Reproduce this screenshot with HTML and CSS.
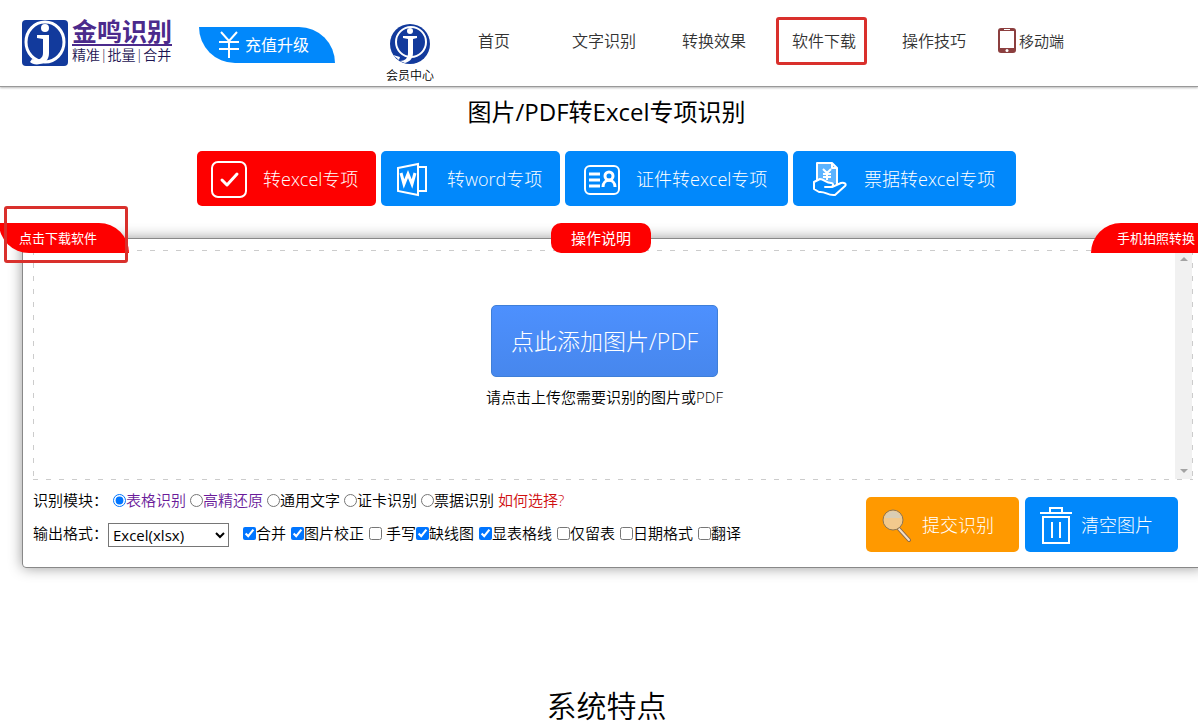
FILE: index.html
```html
<!DOCTYPE html>
<html lang="zh-CN">
<head>
    <meta charset="UTF-8">
    <meta name="viewport" content="width=device-width, initial-scale=1.0">
    <title>金鸣识别</title>
    <link rel="stylesheet" href="styles.css">
</head>
<body>
    <!-- Header: logo, upgrade button, member center and navigation -->
    <header class="header">
        <a class="logo" href="#">
            <svg class="logo-mark" viewBox="0 0 46 46" aria-hidden="true">
                <rect width="46" height="46" rx="4" fill="#123a9c"/>
                <ellipse cx="23" cy="22" rx="19" ry="20" fill="none" stroke="#fff" stroke-width="3"/>
                <circle cx="23" cy="8" r="4" fill="#fff"/>
                <path d="M15 15h12v18c0 6-3 10-9 11-4 1-8 0-10-2l2-3c4 2 11 1 11-6V19l-6-1z" fill="#fff"/>
            </svg>
            <span class="logo-text">
                <strong class="logo-name">金鸣识别</strong>
                <span class="logo-slogan">精准|批量|合并</span>
            </span>
        </a>
        <button class="upgrade-button" type="button">
            <svg class="yen-icon" viewBox="0 0 20 28" fill="none" stroke="#fff" stroke-width="2" aria-hidden="true">
                <path d="M2 1l8 9 8-9M0 11h20M0 18h20M10 10v17"/>
            </svg>
            充值升级
        </button>
        <a class="member" href="#">
            <svg class="member-icon" viewBox="0 0 40 40" aria-hidden="true">
                <circle cx="20" cy="20" r="20" fill="#123a9c"/>
                <circle cx="21" cy="18" r="15" fill="none" stroke="#fff" stroke-width="2"/>
                <circle cx="20" cy="7" r="3" fill="#fff"/>
                <path d="M13 12h14v2l-4 1v14c0 6-4 9-8 10l-5-2c5 0 8-3 8-8V15l-5-1zM3 31l7 2-1 3z" fill="#fff"/>
            </svg>
            会员中心
        </a>
        <nav class="nav">
            <a href="#">首页</a>
            <a href="#">文字识别</a>
            <a href="#">转换效果</a>
            <a class="marked" href="#">软件下载</a>
            <a href="#">操作技巧</a>
        </nav>
        <a class="mobile" href="#">
            <svg class="phone-icon" viewBox="0 0 18 25" aria-hidden="true">
                <rect width="18" height="25" rx="3" fill="#8c3f3f"/>
                <path d="M2 3h14v17H2z" fill="#fff"/>
                <path d="M6 1.500h6" stroke="#fff"/>
                <circle cx="9" cy="22.500" r="1.500" fill="#fff"/>
            </svg>
            移动端
        </a>
    </header>

    <main class="content">
        <h1>图片/PDF转Excel专项识别</h1>

        <!-- Conversion types -->
        <div class="tabs">
            <button class="tab active" type="button">
                <svg viewBox="0 0 38 38" fill="none" stroke="#fff" stroke-linecap="round" stroke-linejoin="round" aria-hidden="true">
                    <rect x="2" y="2" width="34" height="35" rx="6" stroke-width="2"/>
                    <path d="M12 20l5 5 10-11" stroke-width="3"/>
                </svg>
                转excel专项
            </button>
            <button class="tab" type="button">
                <svg viewBox="0 0 38 38" fill="none" stroke="#fff" stroke-width="2" aria-hidden="true">
                    <path d="M4 8l20-4v31L4 31zM24 7h8v24h-8"/>
                    <path d="M7 13l3 11 4-10 4 10 3-11" stroke-width="3"/>
                </svg>
                转word专项
            </button>
            <button class="tab wide" type="button">
                <svg viewBox="0 0 38 38" fill="none" stroke="#fff" stroke-width="3" aria-hidden="true">
                    <rect x="2" y="6" width="34" height="28" rx="5" stroke-width="2"/>
                    <path d="M6 14h11M6 20h11M6 26h11"/>
                    <circle cx="26" cy="16" r="4"/>
                    <path d="M20 27c0-9 12-9 12 0"/>
                </svg>
                证件转excel专项
            </button>
            <button class="tab wide" type="button">
                <svg viewBox="0 0 38 38" fill="none" stroke="#fff" stroke-width="2" stroke-linejoin="round" aria-hidden="true">
                    <path d="M6 20V3h15l5 5v16" fill="#5db4ff"/>
                    <path d="M21 3v5h5"/>
                    <path d="M12 9l4 4 4-4M12 14h8M12 17h8M16 13v7"/>
                    <path d="M3 22l6-3c4 0 6 4 11 4 3 0 3 4-1 4h-5 7l9-4c3-1 6 1 4 3l-10 9c-8 1-9-4-16-3l-5-3z" fill="#0188fb"/>
                </svg>
                票据转excel专项
            </button>
        </div>

        <!-- Upload panel -->
        <section class="panel">
            <a class="ribbon ribbon-left" href="#">点击下载软件</a>
            <a class="ribbon ribbon-middle" href="#">操作说明</a>
            <a class="ribbon ribbon-right" href="#">手机拍照转换</a>
            <span class="download-mark"></span>

            <div class="drop-area">
                <div class="drop-body">
                    <button class="add-button" type="button">点此添加图片/PDF</button>
                    <p>请点击上传您需要识别的图片或PDF</p>
                </div>
                <div class="scroll-track" aria-hidden="true">
                    <span class="arrow-up"></span>
                    <span class="arrow-down"></span>
                </div>
            </div>

            <form class="options">
                <div class="option-rows">
                    <div class="row">
                        <span class="row-label">识别模块：</span>
                        <div class="choices modules">
                            <label class="visited"><input type="radio" name="module" checked>表格识别</label>
                            <label class="visited"><input type="radio" name="module">高精还原</label>
                            <label><input type="radio" name="module">通用文字</label>
                            <label><input type="radio" name="module">证卡识别</label>
                            <label><input type="radio" name="module">票据识别</label>
                            <a class="help" href="#">如何选择?</a>
                        </div>
                    </div>
                    <div class="row">
                        <label class="row-label" for="format">输出格式：</label>
                        <select id="format">
                            <option>Excel(xlsx)</option>
                        </select>
                        <div class="choices formats">
                            <label><input type="checkbox" checked>合并</label>
                            <label><input type="checkbox" checked>图片校正</label>
                            <div class="pair">
                                <label class="spaced"><input type="checkbox">手写</label>
                                <label><input type="checkbox" checked>缺线图</label>
                            </div>
                            <label><input type="checkbox" checked>显表格线</label>
                            <label><input type="checkbox">仅留表</label>
                            <label><input type="checkbox">日期格式</label>
                            <label><input type="checkbox">翻译</label>
                        </div>
                    </div>
                </div>
                <div class="actions">
                    <button class="action submit" type="button">
                        <svg viewBox="0 0 34 40" aria-hidden="true">
                            <path d="M19 24l10 11" stroke="#8a6a4c" stroke-width="4" stroke-linecap="round"/>
                            <path d="M19 24l10 11" stroke="#f3dfc8" stroke-width="2" stroke-linecap="round"/>
                            <circle cx="13" cy="15" r="10" fill="#f2c98d" stroke="#8a7658"/>
                            <path d="M5 13c2-9 14-9 16 0z" fill="#d9cdb5"/>
                        </svg>
                        提交识别
                    </button>
                    <button class="action" type="button">
                        <svg viewBox="0 0 34 40" fill="none" stroke="#fff" stroke-width="2" aria-hidden="true">
                            <path d="M1 8h32M11 8V3h12v5M4 12h26v26H4zM13 17v16M21 17v16"/>
                        </svg>
                        清空图片
                    </button>
                </div>
            </form>
        </section>

        <h2>系统特点</h2>
    </main>
</body>
</html>
```
FILE: styles.css
```css
* {
    box-sizing: border-box;
}

html {
    overflow: hidden;
}

body {
    margin: 0;
    font-family: "Open Sans", "Noto Sans CJK SC", sans-serif;
    font-size: 15px;
    font-weight: 350;
    line-height: 20px;
    color: #000;
    background-color: #fff;
}

a {
    color: inherit;
    text-decoration: none;
}

button {
    border: none;
    padding: 0;
    font: inherit;
    font-weight: 300;
    color: #fff;
    cursor: pointer;
}

/* Header */
.header {
    display: flex;
    align-items: flex-start;
    height: 87px;
    padding-left: 22px;
    border-bottom: 1px solid #999;
    box-shadow: 0 1px 2px #bbb;
    white-space: nowrap;
}

.logo {
    display: flex;
    gap: 4px;
    width: 177px;
    padding-top: 20px;
}

.logo-mark {
    width: 46px;
    height: 46px;
}

.logo-text {
    display: flex;
    flex-direction: column;
    color: #4b2a8c;
}

.logo-name {
    height: 26px;
    border-bottom: 2px solid #4b2a8c;
    font-size: 25px;
    font-weight: 700;
    line-height: 22px;
}

.logo-slogan {
    font-size: 14px;
    line-height: 18px;
    color: #1d1452;
}

.upgrade-button {
    display: flex;
    align-items: center;
    gap: 6px;
    width: 136px;
    height: 36px;
    margin-top: 27px;
    padding-left: 20px;
    border-radius: 0 40px 0 40px;
    background-color: #0188fb;
    font-size: 16px;
    font-weight: 400;
}

.yen-icon {
    width: 20px;
    height: 28px;
}

.member {
    display: flex;
    flex-direction: column;
    align-items: center;
    width: 48px;
    margin-left: 51px;
    padding-top: 24px;
    font-size: 12px;
    line-height: 24px;
}

.member-icon {
    width: 40px;
    height: 40px;
}

.nav {
    display: flex;
    gap: 14px;
    margin-left: 28px;
    padding-top: 17px;
    font-size: 16px;
    line-height: 48px;
    color: #333;
}

.nav a {
    position: relative;
    padding: 0 16px;
}

.nav a:first-child {
    margin-right: 16px;
}

.nav .marked::after {
    content: "";
    position: absolute;
    inset: 0 5px 0 0;
    border: 3px solid #d9302c;
    border-radius: 3px;
}

.mobile {
    display: flex;
    align-items: center;
    gap: 3px;
    margin-left: 16px;
    padding-top: 28px;
    color: #333;
}

.phone-icon {
    width: 18px;
    height: 25px;
}

/* The content is a little wider than the window */
.content {
    margin-right: -15px;
}

h1 {
    margin: 0;
    padding-top: 9px;
    font-size: 24px;
    font-weight: 400;
    line-height: 32px;
    text-align: center;
}

.tabs {
    display: flex;
    justify-content: center;
    gap: 5px;
    margin-top: 23px;
}

.tab {
    display: flex;
    align-items: center;
    gap: 15px;
    width: 179px;
    height: 55px;
    padding-left: 13px;
    border-radius: 5px;
    background-color: #0188fb;
    font-size: 18px;
    white-space: nowrap;
}

.tab svg {
    width: 38px;
    height: 38px;
}

.tab.wide {
    width: 223px;
    padding-left: 18px;
}

.tab.active {
    background-color: #fe0000;
}

/* Upload panel */
.panel {
    position: relative;
    margin: 32px 9px 0 22px;
    padding: 11px 10px 15px;
    border: 1px solid #888;
    border-radius: 4px;
    box-shadow: 0 0 14px #999;
}

.ribbon {
    position: absolute;
    top: -16px;
    height: 30px;
    background-color: #fe0000;
    color: #fff;
    font-size: 13px;
    font-weight: 400;
    line-height: 30px;
    white-space: nowrap;
}

.ribbon-left {
    left: -24px;
    padding: 0 32px 0 20px;
    border-radius: 0 40px 0 40px;
}

.ribbon-middle {
    left: 528px;
    width: 100px;
    border-radius: 10px;
    font-size: 15px;
    text-align: center;
}

.ribbon-right {
    right: -24px;
    padding: 0 32px 0 26px;
    border-radius: 40px 0 40px 0;
}

.download-mark {
    position: absolute;
    top: -33px;
    left: -19px;
    width: 124px;
    height: 57px;
    border: 3px solid #d9302c;
    border-radius: 3px;
}

/* Wide dashes, one background strip for each side */
.drop-area {
    display: flex;
    height: 230px;
    padding: 1px;
    background-image:
        repeating-linear-gradient(90deg, #ccc 0 5px, transparent 5px 13px),
        repeating-linear-gradient(90deg, #ccc 0 5px, transparent 5px 13px),
        repeating-linear-gradient(#ccc 0 5px, transparent 5px 13px),
        repeating-linear-gradient(#ccc 0 5px, transparent 5px 13px);
    background-position: top, bottom, left, right;
    background-repeat: no-repeat;
    background-size: 100% 1px, 100% 1px, 1px 100%, 1px 100%;
}

.drop-body {
    flex: 1;
    padding-top: 54px;
    text-align: center;
}

.add-button {
    width: 227px;
    height: 72px;
    border: 1px solid #3f7fd8;
    border-radius: 5px;
    background: linear-gradient(#4d90fe, #4787ed);
    font-size: 23px;
}

.drop-body p {
    margin: 10px 0 0;
}

.scroll-track {
    display: flex;
    flex-direction: column;
    justify-content: space-between;
    align-items: center;
    width: 17px;
    padding: 6px 0;
    background-color: #f1f1f1;
}

.arrow-up,
.arrow-down {
    border: 4px solid transparent;
}

.arrow-up {
    border-top: none;
    border-bottom-color: #a3a3a3;
}

.arrow-down {
    border-bottom: none;
    border-top-color: #a3a3a3;
}

/* Options under the drop area */
.options {
    display: flex;
    justify-content: space-between;
    padding: 10px 15px 0 0;
    white-space: nowrap;
}

.row {
    display: flex;
    align-items: flex-start;
}

.row + .row {
    margin-top: 13px;
}

.row-label {
    width: 75px;
}

.choices {
    display: flex;
    gap: 4px;
}

.modules {
    margin-left: 5px;
}

.formats {
    margin-left: 14px;
}

.choices label {
    display: flex;
    align-items: center;
}

.choices input {
    width: 13px;
    height: 13px;
    margin: 0;
}

.formats {
    gap: 5px;
}

.choices .spaced {
    gap: 4px;
}

.pair {
    display: flex;
}

.visited {
    color: #6a1b9a;
}

.help {
    color: #d01010;
}

select {
    width: 121px;
    height: 24px;
    border: 1px solid #767676;
    background-color: #fff;
    font: inherit;
    font-weight: 400;
    color: #000;
}

.actions {
    display: flex;
    gap: 6px;
    padding-top: 7px;
}

.action {
    display: flex;
    align-items: center;
    gap: 8px;
    width: 153px;
    height: 55px;
    padding-left: 14px;
    border-radius: 5px;
    background-color: #0188fb;
    font-size: 18px;
}

.action svg {
    width: 34px;
    height: 40px;
}

.submit {
    background-color: #ff9900;
}

h2 {
    margin: 118px 0 0;
    font-size: 30px;
    font-weight: 350;
    line-height: 40px;
    text-align: center;
}
```
